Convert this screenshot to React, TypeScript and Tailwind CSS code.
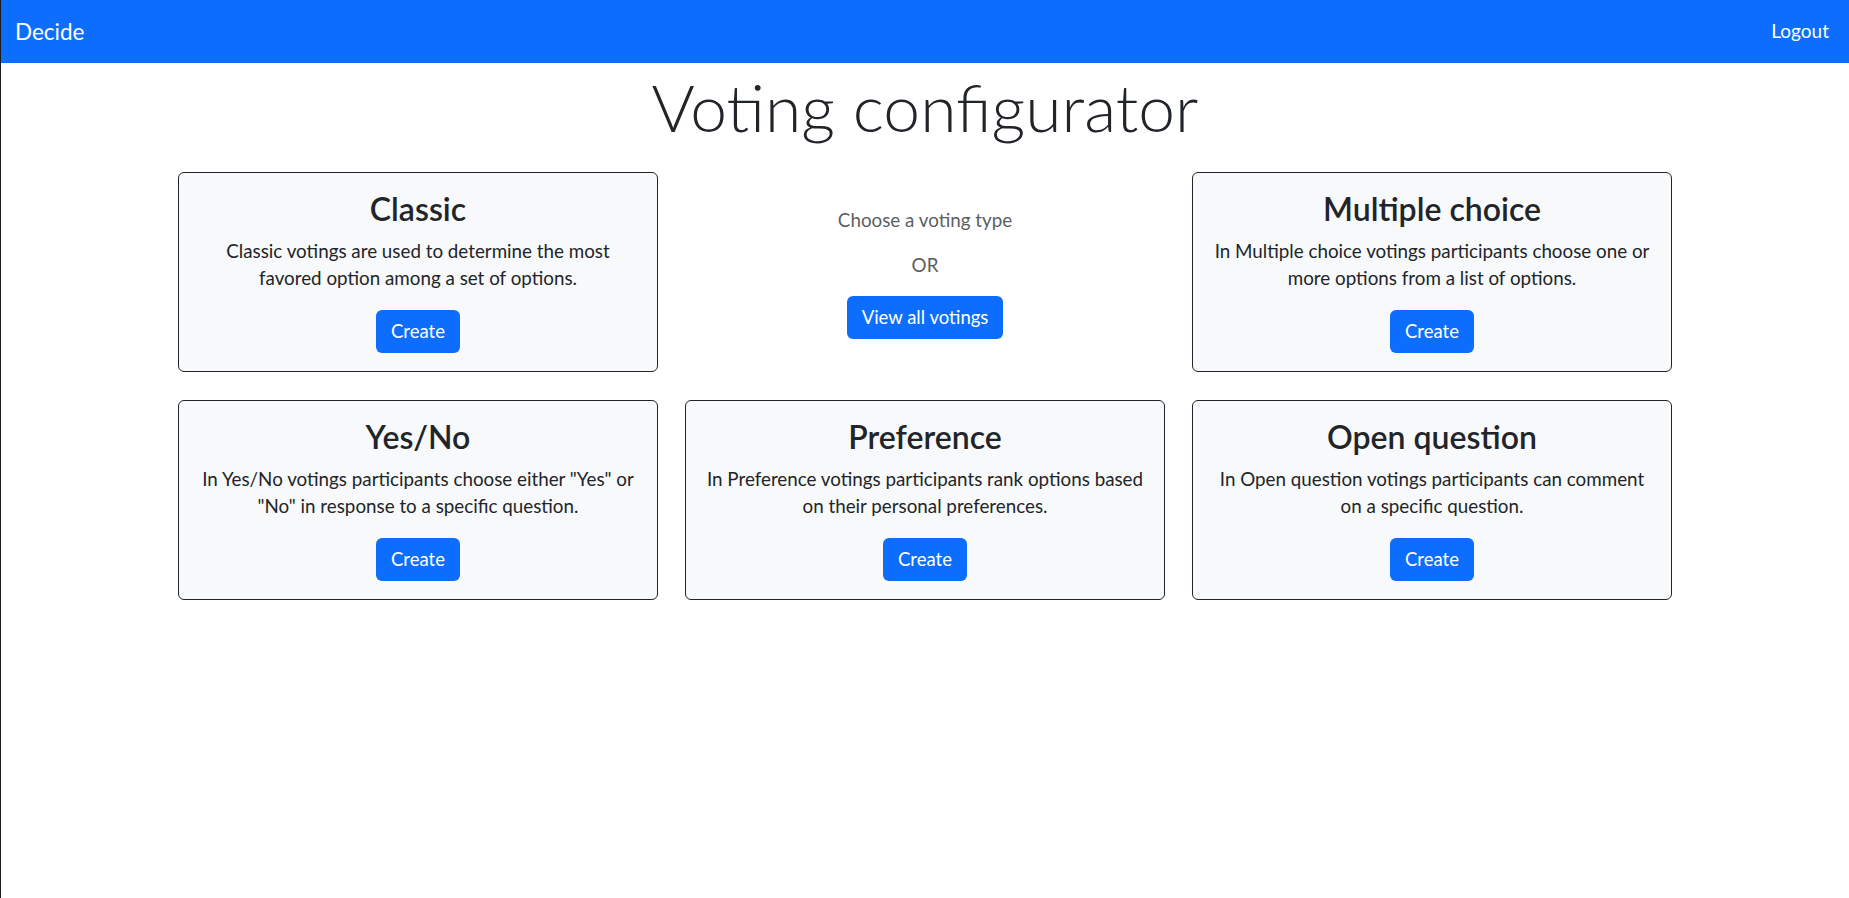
const FONT = "font-['Lato','Noto_Sans',sans-serif]";

type VotingType = {
  title: string;
  lines: string[];
};

const TOP_LEFT: VotingType = {
  title: "Classic",
  lines: ["Classic votings are used to determine the most", "favored option among a set of options."],
};

const TOP_RIGHT: VotingType = {
  title: "Multiple choice",
  lines: ["In Multiple choice votings participants choose one or", "more options from a list of options."],
};

const BOTTOM: VotingType[] = [
  {
    title: "Yes/No",
    lines: ['In Yes/No votings participants choose either "Yes" or', '"No" in response to a specific question.'],
  },
  {
    title: "Preference",
    lines: ["In Preference votings participants rank options based", "on their personal preferences."],
  },
  {
    title: "Open question",
    lines: ["In Open question votings participants can comment", "on a specific question."],
  },
];

function BlueButton({ children }: { children: React.ReactNode }) {
  return (
    <button className="h-[43px] px-[15px] rounded-[6px] bg-[#0d6efd] text-white text-[18.5px] leading-[27px] hover:bg-[#0b5ed7]">
      {children}
    </button>
  );
}

function TypeCard({ item }: { item: VotingType }) {
  return (
    <div className="h-[200px] flex flex-col items-center border border-[#212529] rounded-[6px] bg-[#f8f9fa] px-4 pt-[17px] text-[#212529]">
      <h2 className="text-[32px] leading-[38px] font-semibold">{item.title}</h2>
      <p className="mt-[9px] text-[18.8px] leading-[27px] text-center">
        {item.lines.map((l) => (
          <span key={l} className="block whitespace-nowrap">
            {l}
          </span>
        ))}
      </p>
      <div className="mt-[19px]">
        <BlueButton>Create</BlueButton>
      </div>
    </div>
  );
}

export default function App() {
  return (
    <div className={`min-h-screen bg-white border-l border-[#1d1a1f] ${FONT}`}>
      {/* ── Navbar ── */}
      <nav className="h-[63px] bg-[#0d6efd] flex items-center justify-between pl-[14px] pr-[20px] text-white">
        <span className="text-[22.5px]">Decide</span>
        <a className="text-[19px] cursor-pointer">Logout</a>
      </nav>

      <h1 className="mt-[5px] text-center text-[66px] leading-[77px] font-light text-[#212529]">
        Voting configurator
      </h1>

      {/* ── Voting types ── */}
      <div className="w-[1494px] mx-auto mt-[27px] grid grid-cols-3 gap-x-[27px] gap-y-[28px]">
        <TypeCard item={TOP_LEFT} />

        <div className="h-[200px] flex flex-col items-center justify-center gap-[18px] text-[18.8px] leading-[27px] text-[#5c5f62]">
          <p>Choose a voting type</p>
          <p>OR</p>
          <BlueButton>View all votings</BlueButton>
        </div>

        <TypeCard item={TOP_RIGHT} />

        {BOTTOM.map((item) => (
          <TypeCard key={item.title} item={item} />
        ))}
      </div>
    </div>
  );
}
